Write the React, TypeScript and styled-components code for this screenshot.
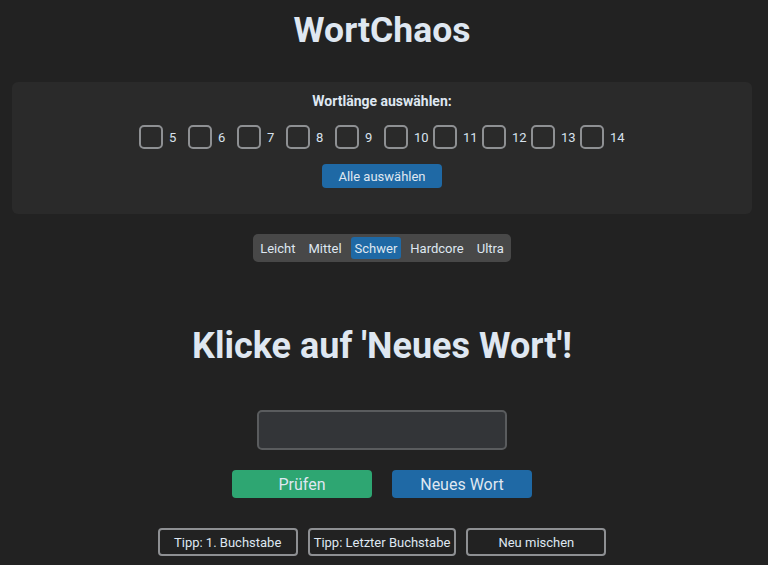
import React, { useState } from 'react'
import { createGlobalStyle, styled } from 'styled-components'

const GlobalStyle = createGlobalStyle`
  html, body {
    margin: 0;
    padding: 0;
    background: #222222;
    color: #dfe7f1;
    font-family: Roboto, "Liberation Sans", Arial, sans-serif;
  }
  * { box-sizing: border-box; }
`

const Page = styled.div`
  display: flex;
  flex-direction: column;
  align-items: center;
  padding: 9px 16px 0 12px;
`

const Title = styled.h1`
  margin: 0;
  font-size: 35.5px;
  line-height: 42px;
  font-weight: 700;
  color: #dfe7f1;
`

const Panel = styled.section`
  align-self: stretch;
  margin-top: 31px;
  height: 132px;
  padding: 11px 0 0;
  background: #2a2a2a;
  border-radius: 6px;
  display: flex;
  flex-direction: column;
  align-items: center;
`

const PanelLabel = styled.div`
  font-size: 14px;
  line-height: 16px;
  font-weight: 700;
`

const LengthRow = styled.div`
  margin-top: 16px;
  padding-left: 4px;
  display: flex;
  justify-content: center;
`

const LengthItem = styled.label`
  width: 49px;
  display: flex;
  align-items: center;
  gap: 6px;
  font-size: 13px;
  color: #d8e2ee;
  cursor: pointer;
`

const Box = styled.input`
  appearance: none;
  margin: 0;
  width: 24px;
  height: 24px;
  border: 2.5px solid #8e9093;
  border-radius: 5px;
  background: transparent;
  cursor: pointer;

  &:checked {
    background: #1f69a5;
    border-color: #1f69a5;
  }
`

const Button = styled.button<{ $tone: 'blue' | 'green' }>`
  border: none;
  border-radius: 4px;
  color: #dfe7f1;
  font-family: inherit;
  cursor: pointer;
  background: ${(p) => (p.$tone === 'green' ? '#2ea672' : '#1f69a5')};
`

const SelectAll = styled(Button)`
  margin-top: 15px;
  width: 120px;
  height: 24px;
  font-size: 13px;
`

const Levels = styled.div`
  margin-top: 20px;
  display: flex;
  gap: 5px;
  padding: 3px;
  background: #484848;
  border-radius: 5px;
`

const Level = styled.button<{ $active: boolean }>`
  height: 22px;
  padding: 0 4px;
  border: none;
  border-radius: 3px;
  font-family: inherit;
  font-size: 13px;
  color: #dfe7f1;
  background: ${(p) => (p.$active ? '#1f69a5' : 'transparent')};
  cursor: pointer;
`

const Prompt = styled.h2`
  margin: 63px 0 0;
  font-size: 36px;
  line-height: 43px;
  font-weight: 700;
  color: #dfe7f1;
`

const Guess = styled.input`
  margin-top: 42px;
  width: 250px;
  height: 40px;
  border: 2px solid #5a5c5e;
  border-radius: 5px;
  background: #333538;
  color: #dfe7f1;
  font-family: inherit;
  font-size: 18px;
  text-align: center;
  outline: none;
`

const ActionRow = styled.div`
  margin-top: 20px;
  display: flex;
  gap: 20px;
`

const Action = styled(Button)`
  width: 140px;
  height: 28px;
  font-size: 16px;
`

const TipRow = styled.div`
  margin-top: 30px;
  display: flex;
  gap: 10px;
`

const Tip = styled.button`
  min-width: 140px;
  height: 28px;
  padding: 0 4px;
  border: 2px solid #8e9093;
  border-radius: 4px;
  background: transparent;
  color: #dfe7f1;
  font-family: inherit;
  font-size: 13px;
  cursor: pointer;
`

const lengths = [5, 6, 7, 8, 9, 10, 11, 12, 13, 14]
const levels = ['Leicht', 'Mittel', 'Schwer', 'Hardcore', 'Ultra']

export default function App() {
  const [picked, setPicked] = useState<number[]>([])
  const [level, setLevel] = useState('Schwer')

  const toggle = (n: number) =>
    setPicked((cur) => (cur.includes(n) ? cur.filter((x) => x !== n) : [...cur, n]))

  return (
    <>
      <GlobalStyle />
      <Page>
        <Title>WortChaos</Title>

        <Panel>
          <PanelLabel>Wortlänge auswählen:</PanelLabel>
          <LengthRow>
            {lengths.map((n) => (
              <LengthItem key={n}>
                <Box type="checkbox" checked={picked.includes(n)} onChange={() => toggle(n)} />
                {n}
              </LengthItem>
            ))}
          </LengthRow>
          <SelectAll $tone="blue" onClick={() => setPicked(lengths)}>
            Alle auswählen
          </SelectAll>
        </Panel>

        <Levels>
          {levels.map((l) => (
            <Level key={l} $active={l === level} onClick={() => setLevel(l)}>
              {l}
            </Level>
          ))}
        </Levels>

        <Prompt>Klicke auf 'Neues Wort'!</Prompt>

        <Guess type="text" />

        <ActionRow>
          <Action $tone="green">Prüfen</Action>
          <Action $tone="blue">Neues Wort</Action>
        </ActionRow>

        <TipRow>
          <Tip>Tipp: 1. Buchstabe</Tip>
          <Tip>Tipp: Letzter Buchstabe</Tip>
          <Tip>Neu mischen</Tip>
        </TipRow>
      </Page>
    </>
  )
}
